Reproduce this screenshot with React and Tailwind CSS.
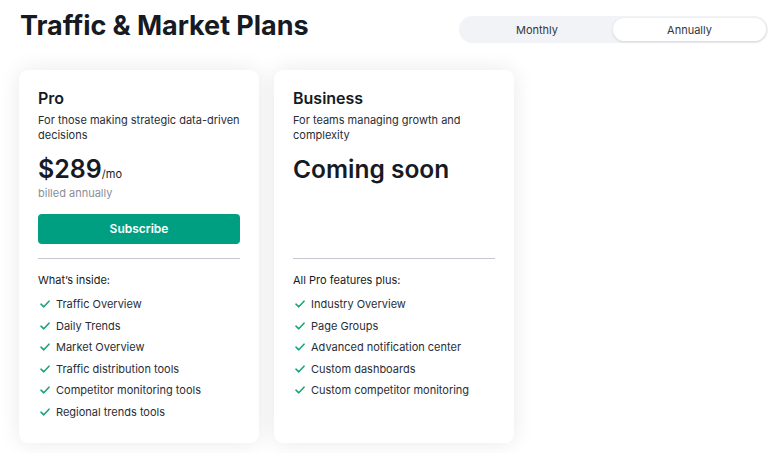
import React from "react";

function Check() {
  return (
    <svg width="10" height="8" viewBox="0 0 10 8" fill="none" className="shrink-0">
      <path d="M1 4.2 L3.8 6.8 L9 1.2" stroke="#1ca37f" strokeWidth="1.6" strokeLinecap="round" strokeLinejoin="round" />
    </svg>
  );
}

function Card({ title, desc, children, heading, items }) {
  return (
    <div className="w-[240px] h-[373px] bg-white rounded-[9px] shadow-[0_0_22px_rgba(20,25,45,0.09)] px-[19px] pt-[16px] flex flex-col">
      <div className="h-[172px] flex flex-col">
        <div className="text-[16px] leading-[24px] font-semibold text-[#171a22]">{title}</div>
        <div className="mt-[3px] mr-[-10px] text-[11px] leading-[15px] text-[#2a2d36]">{desc}</div>
        {children}
      </div>
      <div className="h-px bg-[#c6c8d0]" />
      <div className="mt-[13px] text-[11px] leading-[16px] text-[#171a22]">{heading}</div>
      <ul className="mt-[8px] flex flex-col gap-[5.6px]">
        {items.map((it) => (
          <li key={it} className="flex items-center gap-[6px] pl-[2px] text-[11px] leading-[16px] text-[#2a2d36]">
            <Check />
            <span>{it}</span>
          </li>
        ))}
      </ul>
    </div>
  );
}

export default function App() {
  return (
    <div className="w-[778px] h-[453px] bg-white overflow-hidden font-['Inter','Noto_Sans',sans-serif]">
      <div className="flex items-start justify-between pl-[20px] pr-[10px]">
        <h1 className="mt-[10px] text-[27px] leading-[32px] font-bold tracking-[-0.05px] text-[#171a22]">Traffic &amp; Market Plans</h1>
        <div className="mt-[16px] w-[309px] h-[27px] rounded-full bg-[#f2f3f7] flex items-center p-[2px]">
          <div className="flex-1 text-center text-[11px] leading-[23px] pt-px text-[#333640]">Monthly</div>
          <div className="w-[153px] h-[23px] pt-px rounded-full bg-white shadow-[0_1px_3px_rgba(0,0,0,0.12)] flex items-center justify-center text-[11px] text-[#333640]">Annually</div>
        </div>
      </div>
      <div className="flex gap-[15px] pl-[19px] mt-[27px]">
        <Card
          title="Pro"
          desc={<>For those making strategic <span className="whitespace-nowrap">data-driven</span> decisions</>}
          heading="What’s inside:"
          items={["Traffic Overview", "Daily Trends", "Market Overview", "Traffic distribution tools", "Competitor monitoring tools", "Regional trends tools"]}
        >
          <div className="mt-[10px] flex items-baseline text-[#171a22]">
            <span className="text-[25px] leading-[32px] font-semibold">$289</span>
            <span className="text-[11px]">/mo</span>
          </div>
          <div className="text-[11px] leading-[16px] text-[#8b8e99]">billed annually</div>
          <button className="mt-[13px] h-[30px] w-full rounded-[4px] bg-[#009f81] text-white text-[12px] font-semibold">Subscribe</button>
        </Card>
        <Card
          title="Business"
          desc="For teams managing growth and complexity"
          heading="All Pro features plus:"
          items={["Industry Overview", "Page Groups", "Advanced notification center", "Custom dashboards", "Custom competitor monitoring"]}
        >
          <div className="mt-[10px] text-[24.5px] leading-[32px] font-semibold text-[#171a22]">Coming soon</div>
        </Card>
      </div>
    </div>
  );
}
